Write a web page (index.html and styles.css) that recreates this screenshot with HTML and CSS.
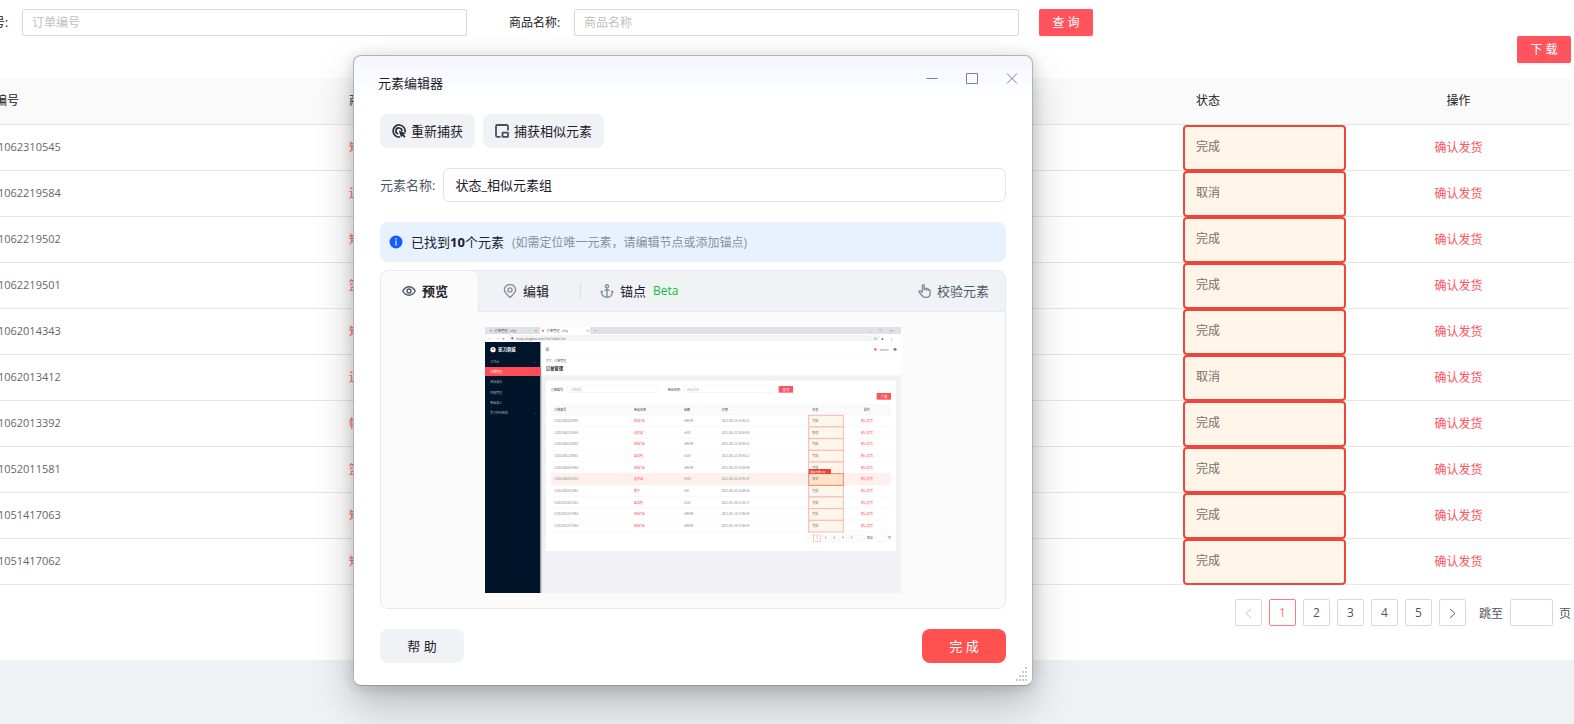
FILE: index.html
```html
<!DOCTYPE html>
<html lang="zh-CN">
<head>
    <meta charset="UTF-8">
    <meta name="viewport" content="width=device-width, initial-scale=1.0">
    <title>订单管理</title>
    <link rel="stylesheet" href="styles.css">
</head>
<body>
    <main class="order-page">
        <form class="search-form">
            <div class="field">
                <label for="orderNo">订单编号:</label>
                <input type="text" id="orderNo" placeholder="订单编号">
            </div>
            <div class="field">
                <label for="goodsName">商品名称:</label>
                <input type="text" id="goodsName" placeholder="商品名称">
            </div>
            <button type="button" class="btn-red">查 询</button>
        </form>
        <div class="actions">
            <button type="button" class="btn-red">下 载</button>
        </div>

        <table class="orders">
            <thead>
                <tr><th class="col-no">订单编号</th><th>商品名称</th><th class="col-status">状态</th><th class="col-op">操作</th></tr>
            </thead>
            <tbody>
                <tr><td class="no">U2021062310545</td><td class="goods">短袖T恤</td><td class="status"><div>完成</div></td><td class="op"><a href="#">确认发货</a></td></tr>
                <tr><td class="no">U2021062219584</td><td class="goods">连衣裙</td><td class="status"><div>取消</div></td><td class="op"><a href="#">确认发货</a></td></tr>
                <tr><td class="no">U2021062219502</td><td class="goods">短袖T恤</td><td class="status"><div>完成</div></td><td class="op"><a href="#">确认发货</a></td></tr>
                <tr><td class="no">U2021062219501</td><td class="goods">篮球鞋</td><td class="status"><div>完成</div></td><td class="op"><a href="#">确认发货</a></td></tr>
                <tr><td class="no">U2021062014343</td><td class="goods">短袖T恤</td><td class="status"><div>完成</div></td><td class="op"><a href="#">确认发货</a></td></tr>
                <tr><td class="no">U2021062013412</td><td class="goods">连衣裙</td><td class="status"><div>取消</div></td><td class="op"><a href="#">确认发货</a></td></tr>
                <tr><td class="no">U2021062013392</td><td class="goods">帽子</td><td class="status"><div>完成</div></td><td class="op"><a href="#">确认发货</a></td></tr>
                <tr><td class="no">U2021052011581</td><td class="goods">篮球鞋</td><td class="status"><div>完成</div></td><td class="op"><a href="#">确认发货</a></td></tr>
                <tr><td class="no">U2021051417063</td><td class="goods">短袖T恤</td><td class="status"><div>完成</div></td><td class="op"><a href="#">确认发货</a></td></tr>
                <tr><td class="no">U2021051417062</td><td class="goods">短袖T恤</td><td class="status"><div>完成</div></td><td class="op"><a href="#">确认发货</a></td></tr>
            </tbody>
        </table>

        <nav class="pager">
            <button type="button" class="prev" aria-label="上一页" disabled><svg width="9" height="12" viewBox="0 0 9 12"><path d="M7 2 2 6.5 7 11"/></svg></button>
            <button type="button" class="current">1</button>
            <button type="button">2</button>
            <button type="button">3</button>
            <button type="button">4</button>
            <button type="button">5</button>
            <button type="button" class="next" aria-label="下一页"><svg width="9" height="12" viewBox="0 0 9 12"><path d="M2 2 7 6.5 2 11"/></svg></button>
            <label for="jump">跳至</label>
            <input type="text" id="jump">
            <span>页</span>
        </nav>
    </main>

    <section class="editor">
        <header class="editor-header">
            <h1>元素编辑器</h1>
            <div class="window-buttons">
                <button type="button" aria-label="最小化"><svg width="14" height="14" viewBox="0 0 14 14"><path d="M1.500 7.500h11"/></svg></button>
                <button type="button" aria-label="最大化"><svg width="14" height="14" viewBox="0 0 14 14"><path d="M1.500 2.500h11v10h-11z"/></svg></button>
                <button type="button" aria-label="关闭"><svg width="14" height="14" viewBox="0 0 14 14"><path d="M2 2.500 12 12.500M12 2.500 2 12.500"/></svg></button>
            </div>
        </header>

        <div class="editor-body">
            <div class="toolbar">
                <button type="button" class="btn-grey">
                    <svg width="14" height="14" viewBox="0 0 14 14" fill="none" stroke="#2b303b" stroke-width="1.700"><path d="M12.900 8.500A6 6 0 1 0 8 12.900"/><path d="M9.900 7.200A3 3 0 1 0 6.300 9.900"/><path d="M6.800 6.600l6.800 2.600-1.900 1.300 1.900 2-1.300 1.300-2-2-1.300 1.800z" fill="#2b303b" stroke="none"/></svg>
                    重新捕获
                </button>
                <button type="button" class="btn-grey">
                    <svg width="14" height="14" viewBox="0 0 14 14" fill="none" stroke="#4a4f5c" stroke-width="1.800"><path d="M5.500 12.900H2.400a1.400 1.400 0 0 1-1.400-1.400V2.400A1.400 1.400 0 0 1 2.400 1h9.200A1.400 1.400 0 0 1 13 2.400v4"/><rect x="7.500" y="8.700" width="5.500" height="4.200" rx=".5"/></svg>
                    捕获相似元素
                </button>
            </div>

            <div class="name-row">
                <label for="elementName">元素名称:</label>
                <input type="text" id="elementName" value="状态_相似元素组">
            </div>

            <div class="found">
                <svg width="14" height="14" viewBox="0 0 14 14"><circle cx="7" cy="7" r="6.500" fill="#165dff"/><path d="M7 3v1.400M7 5.500V10.500" stroke="#d5e3ff" stroke-width="1.300"/></svg>
                <span>已找到<b>10</b>个元素</span>
                <small>(如需定位唯一元素，请编辑节点或添加锚点)</small>
            </div>

            <div class="panel">
                <div class="tabs">
                    <button type="button" class="tab active">
                        <svg width="14" height="14" viewBox="0 0 14 14" stroke-width="1.400"><path d="M.8 7C2.200 4.300 4.400 2.800 7 2.800S11.800 4.300 13.200 7C11.800 9.700 9.600 11.200 7 11.200S2.200 9.700.8 7z"/><circle cx="7" cy="7" r="2"/></svg>
                        预览
                    </button>
                    <button type="button" class="tab">
                        <svg width="14" height="14" viewBox="0 0 14 14" stroke-width="1.400"><path d="M7 13.500C3.500 10.300 1.400 8.200 1.400 5.700a5.600 5.200 0 0 1 11.200 0c0 2.500-2.100 4.600-5.600 7.800z"/><circle cx="7" cy="5.900" r="2"/></svg>
                        编辑
                    </button>
                    <button type="button" class="tab anchor">
                        <svg width="14" height="14" viewBox="0 0 14 14" stroke-width="1.400"><circle cx="7" cy="2.300" r="1.600"/><path d="M7 4v9.300M4.500 6.300h5M.5 7.500h2.600M10.900 7.500h2.600M1.500 7.500c0 3.500 2 5.800 5.500 5.800s5.500-2.300 5.500-5.800"/></svg>
                        锚点
                        <em>Beta</em>
                    </button>
                    <button type="button" class="verify">
                        <svg width="14" height="14" viewBox="0 0 14 14" stroke-width="1.400"><path d="M4.400 8.500V1.700c0-1.300 1.900-1.300 1.900 0v4.600M6.300 6.300V5.200c0-1 1.900-1 1.900 0v1.500M8.200 6V5.300c0-1 1.900-1 1.900 0V7M10.100 6.500c0-1 2-.9 2 .2v2.800c0 2.200-1.500 4-4.100 4-2.100 0-3.400-.8-4.300-2.300L1.200 8c-.5-1 .8-1.600 1.500-.9l1.700 1.400"/></svg>
                        校验元素
                    </button>
                </div>
                <div class="preview">
                    <svg class="thumb" viewBox="0 0 1248 798" role="img" aria-label="订单管理">
                        <rect width="1248" height="798" fill="#f0f0f5"/>
                        <!-- browser bar -->
                        <rect width="1248" height="21" fill="#dee1e6"/>
                        <rect x="165" width="150" height="21" fill="#fff"/>
                        <rect y="21" width="1248" height="24" fill="#fff"/>
                        <rect x="66" y="24" width="1120" height="18" rx="9" fill="#f3f4f4"/>
                        <g font-size="10" fill="#555">
                            <circle cx="18" cy="11" r="3" fill="#ff8088"/><text x="28" y="15">订单管理 - ctly</text><text x="148" y="15">×</text>
                            <circle cx="174" cy="11" r="3" fill="#ff535e"/><text x="184" y="15">订单管理 - ctly</text><text x="303" y="15">×</text>
                            <text x="328" y="15">+</text>
                            <text x="1155" y="15">–</text><text x="1183" y="15">❐</text><text x="1214" y="15">×</text>
                            <text x="10" y="38" fill="#aaa">←</text><text x="32" y="38" fill="#aaa">→</text><text x="52" y="38">⟳</text>
                            <circle cx="82" cy="34" r="3"/><text x="93" y="38" fill="#777">shop.yingdao.com/list/table-list</text>
                            <text x="1166" y="38">☆</text><text x="1188" y="38">♟</text><text x="1214" y="38">⋮</text>
                        </g>
                        <!-- side menu -->
                        <rect y="45" width="166" height="753" fill="#001529"/>
                        <rect x="166" y="45" width="3" height="753" fill="#8c979f"/>
                        <rect y="120" width="167" height="27" fill="#ff4d58"/>
                        <circle cx="24" cy="68" r="8" fill="#fff"/><circle cx="24" cy="66" r="3" fill="#ff535e"/>
                        <text x="40" y="73" font-size="13" font-weight="bold" fill="#fff">影刀商城</text>
                        <g font-size="9" fill="#a6adb4">
                            <text x="16" y="107">工作台</text><text x="148" y="107">⌄</text>
                            <text x="16" y="138" fill="#fff">订单管理</text>
                            <text x="16" y="169">商品展示</text>
                            <text x="16" y="200">内部管理</text>
                            <text x="16" y="231">数据录入</text>
                            <text x="16" y="262">影刀RPA商城</text><text x="148" y="262">⌄</text>
                        </g>
                        <!-- page head -->
                        <rect x="169" y="45" width="1079" height="100" fill="#fff"/>
                        <path d="M169 88h1079" stroke="#f3f3f6"/>
                        <path d="M182 63h10M182 67h10M182 71h10" stroke="#777" stroke-width="2"/>
                        <circle cx="1171" cy="67" r="4" fill="#ff6d76"/><text x="1184" y="71" font-size="9" fill="#888">admin</text><circle cx="1230" cy="67" r="5" fill="#888"/>
                        <text x="182" y="106" font-size="9" fill="#999">首页 / <tspan fill="#555">订单管理</tspan></text>
                        <text x="182" y="130" font-size="13" font-weight="bold" fill="#222">订单管理</text>
                        <!-- search -->
                        <rect x="183" y="161" width="1050" height="511" fill="#fff"/>
                        <g font-size="9" fill="#444">
                            <text x="198" y="191">订单编号:</text><rect x="247" y="177" width="270" height="20" fill="#fff" stroke="#e8e8e8"/><text x="256" y="191" fill="#bbb">订单编号</text>
                            <text x="548" y="191">商品名称:</text><rect x="597" y="177" width="270" height="20" fill="#fff" stroke="#e8e8e8"/><text x="606" y="191" fill="#bbb">商品名称</text>
                        </g>
                        <rect x="881" y="177" width="43" height="20" fill="#ff535e"/><text x="893" y="191" font-size="9" fill="#fff">查 询</text>
                        <rect x="1175" y="198" width="43" height="20" fill="#ff535e"/><text x="1187" y="212" font-size="9" fill="#fff">下 载</text>
                        <rect x="198" y="231" width="1020" height="33" fill="#fafafa"/>
                        <rect x="198" y="439" width="1020" height="35" fill="#fff0ee"/>
                        <g font-size="9" fill="#444">
                            <text x="208" y="251">订单编号</text><text x="447" y="251">商品名称</text><text x="597" y="251">金额</text><text x="710" y="251">日期</text><text x="982" y="251">状态</text><text x="1136" y="251">操作</text>
                        </g>
                        <path d="M198 264h1020M198 299h1020M198 334h1020M198 369h1020M198 404h1020M198 439h1020M198 474h1020M198 509h1020M198 544h1020M198 579h1020M198 614h1020" stroke="#eee"/>
                        <g font-size="9" fill="#888">
                            <text x="208" y="285">U2021062310545</text><text x="597" y="285">¥99.99</text><text x="710" y="285">2021-06-23 14:05:22</text>
                            <text x="208" y="320">U2021062219584</text><text x="597" y="320">¥420</text><text x="710" y="320">2021-06-22 19:58:45</text>
                            <text x="208" y="355">U2021062219502</text><text x="597" y="355">¥99.99</text><text x="710" y="355">2021-06-22 19:50:23</text>
                            <text x="208" y="390">U2021062219501</text><text x="597" y="390">¥188</text><text x="710" y="390">2021-06-22 19:50:12</text>
                            <text x="208" y="425">U2021062014343</text><text x="597" y="425">¥99.99</text><text x="710" y="425">2021-06-20 14:34:39</text>
                            <text x="208" y="460">U2021062013412</text><text x="597" y="460">¥420</text><text x="710" y="460">2021-06-20 13:41:24</text>
                            <text x="208" y="495">U2021062013392</text><text x="597" y="495">¥50</text><text x="710" y="495">2021-06-20 13:39:26</text>
                            <text x="208" y="530">U2021052011581</text><text x="597" y="530">¥188</text><text x="710" y="530">2021-05-20 11:58:17</text>
                            <text x="208" y="565">U2021051417063</text><text x="597" y="565">¥99.99</text><text x="710" y="565">2021-05-14 17:06:34</text>
                            <text x="208" y="600">U2021051417062</text><text x="597" y="600">¥99.99</text><text x="710" y="600">2021-05-14 17:06:24</text>
                        </g>
                        <g font-size="9" fill="#ff535e">
                            <text x="447" y="285">短袖T恤</text><text x="1128" y="285">确认发货</text>
                            <text x="447" y="320">连衣裙</text><text x="1128" y="320">确认发货</text>
                            <text x="447" y="355">短袖T恤</text><text x="1128" y="355">确认发货</text>
                            <text x="447" y="390">篮球鞋</text><text x="1128" y="390">确认发货</text>
                            <text x="447" y="425">短袖T恤</text><text x="1128" y="425">确认发货</text>
                            <text x="447" y="460">连衣裙</text><text x="1128" y="460">确认发货</text>
                            <text x="447" y="495">帽子</text><text x="1128" y="495">确认发货</text>
                            <text x="447" y="530">篮球鞋</text><text x="1128" y="530">确认发货</text>
                            <text x="447" y="565">短袖T恤</text><text x="1128" y="565">确认发货</text>
                            <text x="447" y="600">短袖T恤</text><text x="1128" y="600">确认发货</text>
                        </g>
                        <!-- matched cells -->
                        <g fill="#fef6ea" stroke="#f5b9b6" stroke-width="3">
                            <rect x="971" y="265" width="104" height="35"/><rect x="971" y="300" width="104" height="35"/>
                            <rect x="971" y="335" width="104" height="35"/><rect x="971" y="370" width="104" height="35"/>
                            <rect x="971" y="405" width="104" height="35"/><rect x="971" y="475" width="104" height="35"/>
                            <rect x="971" y="510" width="104" height="35"/><rect x="971" y="545" width="104" height="35"/>
                            <rect x="971" y="580" width="104" height="35"/>
                            <rect x="971" y="440" width="104" height="35" fill="#ffe3c9" stroke="#f08a72"/>
                        </g>
                        <g font-size="9" fill="#777">
                            <text x="982" y="285">完成</text><text x="982" y="320">取消</text><text x="982" y="355">完成</text><text x="982" y="390">完成</text><text x="982" y="425">完成</text>
                            <text x="982" y="460">取消</text><text x="982" y="495">完成</text><text x="982" y="530">完成</text><text x="982" y="565">完成</text><text x="982" y="600">完成</text>
                        </g>
                        <rect x="971" y="426" width="67" height="15" fill="#e5453b"/><text x="976" y="437" font-size="8" fill="#fff">相似元素(10)</text>
                        <!-- pagination -->
                        <g fill="#fff" stroke="#e4e4e4">
                            <rect x="960" y="624" width="20" height="20"/><rect x="1012" y="624" width="20" height="20"/><rect x="1038" y="624" width="20" height="20"/><rect x="1064" y="624" width="20" height="20"/><rect x="1090" y="624" width="20" height="20"/><rect x="1116" y="624" width="20" height="20"/><rect x="1171" y="624" width="31" height="20"/>
                            <rect x="986" y="624" width="20" height="20" stroke="#ff535e"/>
                        </g>
                        <g font-size="9" fill="#666">
                            <text x="968" y="637" fill="#bbb">‹</text><text x="994" y="637" fill="#ff535e">1</text><text x="1019" y="637">2</text><text x="1045" y="637">3</text><text x="1071" y="637">4</text><text x="1097" y="637">5</text><text x="1124" y="637">›</text>
                            <text x="1146" y="637">跳至</text><text x="1209" y="637">页</text>
                        </g>
                    </svg>
                </div>
            </div>

            <footer class="editor-footer">
                <button type="button" class="btn-grey">帮 助</button>
                <button type="button" class="btn-done">完 成</button>
            </footer>
        </div>
        <svg class="grip" width="14" height="14" viewBox="0 0 14 14" fill="#c6c9ce"><path d="M11 0h2v2h-2zM8 4h2v2H8zM11 4h2v2h-2zM5 8h2v2H5zM8 8h2v2H8zM11 8h2v2h-2zM2 12h2v2H2zM5 12h2v2H5zM8 12h2v2H8zM11 12h2v2h-2z"/></svg>
    </section>
</body>
</html>
```
FILE: styles.css
```css
* {
    box-sizing: border-box;
}
body {
    margin: 0;
    background: #f0f1f5;
    font-family: "Open Sans", "Noto Sans CJK SC", sans-serif;
    font-size: 12px;
    color: #333;
    overflow: hidden;
}
button, input {
    font-family: inherit;
    font-size: inherit;
    margin: 0;
}
button {
    border: none;
    cursor: pointer;
    padding: 0;
}
a {
    color: #ff535e;
    text-decoration: none;
}

/* order list, scrolled a little to the right */
.order-page {
    margin-left: -43px;
    padding: 9px 3px 34px 0;
    background: #fff;
}
.search-form {
    display: flex;
    padding-right: 478px;
}
.field {
    display: flex;
    flex: 1;
    align-items: center;
    gap: 9px;
    margin-right: 42px;
}
.field + .field {
    margin-right: 20px;
}
.field label {
    width: 56px;
    padding-bottom: 2px;
    color: #222;
}
.field input {
    flex: 1;
    min-width: 0;
    height: 27px;
    padding: 0 9px;
    border: 1px solid #d9d9d9;
    border-radius: 2px;
}
.field input::placeholder {
    color: #bfbfbf;
}
.btn-red {
    width: 54px;
    height: 27px;
    padding-bottom: 2px;
    border-radius: 2px;
    background: #ff535e;
    color: #fff;
    box-shadow: 0 2px 0 rgba(0,0,0,0.04);
}
.actions {
    display: flex;
    justify-content: flex-end;
    margin-bottom: 15px;
}
.orders {
    width: 100%;
    table-layout: fixed;
    border-collapse: separate;
    border-spacing: 0;
}
.orders th, .orders td {
    height: 46px;
    padding: 0 10px 2px;
    border-bottom: 1px solid #e6e6e6;
    text-align: left;
}
.orders th {
    height: 47px;
    background: #fafafa;
    color: #222;
    font-weight: normal;
}
.orders td {
    color: #666;
}
.orders .col-no, .orders .no {
    padding-left: 14px;
}
.orders .col-no {
    width: 382px;
}
.orders .col-status {
    width: 163px;
    padding-left: 13px;
}
.orders .col-op {
    width: 225px;
}
.orders .no {
    font-size: 11px;
}
.orders .goods {
    color: #ff535e;
}
.orders .status {
    padding: 0;
    border-bottom: none;
}
.status div {
    height: 46px;
    padding-left: 11px;
    border: 2px solid #ec463d;
    border-radius: 4px;
    background: #fff6e9;
    line-height: 40px;
    color: #777065;
}
.orders .col-op, .orders .op {
    text-align: center;
}

.pager {
    display: flex;
    justify-content: flex-end;
    align-items: center;
    gap: 7px;
    margin-top: 14px;
    color: #555;
}
.pager button, .pager input {
    width: 27px;
    height: 27px;
    border: 1px solid #d9d9d9;
    border-radius: 2px;
    background: #fff;
    color: #555;
}
.pager .current {
    border-color: #ff7a82;
    color: #ff7a82;
}
.pager svg {
    display: block;
    margin: 0 auto;
    fill: none;
    stroke: #666;
}
.pager .prev svg {
    stroke: #c4c4c4;
}
.pager label {
    margin-left: 6px;
}
.pager input {
    width: 43px;
}
.pager span {
    margin-left: -1px;
}

/* editor window */
.editor {
    position: absolute;
    top: 55px;
    left: 353px;
    width: 680px;
    border: 1px solid #b0b2b6;
    border-bottom-color: #999;
    border-radius: 8px;
    background: linear-gradient(#f3f6ff, #fff 44px);
    box-shadow: 0 20px 40px rgba(0,0,0,0.22), 0 2px 14px rgba(0,0,0,0.16);
    font-size: 13px;
    color: #1d2129;
}
.editor-header {
    display: flex;
    justify-content: space-between;
    height: 58px;
    padding: 9px 7px 0 24px;
}
.editor-header h1 {
    margin: 0;
    padding-top: 8px;
    font-size: 13px;
    font-weight: normal;
    line-height: 20px;
}
.window-buttons {
    display: flex;
    gap: 14px;
}
.window-buttons button {
    width: 26px;
    height: 26px;
    background: none;
}
.window-buttons svg {
    display: block;
    margin: 0 auto;
    fill: none;
    stroke: #74829c;
}
.editor-body {
    padding: 0 26px 22px;
}
.toolbar {
    display: flex;
    gap: 8px;
}
.btn-grey, .btn-done {
    display: flex;
    align-items: center;
    justify-content: center;
    gap: 5px;
    height: 34px;
    padding: 0 12px 2px;
    border-radius: 8px;
    background: #f1f2f6;
    color: #1d2129;
}
.toolbar svg {
    margin-top: 2px;
}
.name-row {
    display: flex;
    align-items: center;
    gap: 8px;
    margin: 20px 0;
}
.name-row label {
    padding-bottom: 2px;
    color: #4e5969;
}
.name-row input {
    flex: 1;
    height: 34px;
    padding: 0 11px 2px;
    border: 1px solid #e3e4e8;
    border-radius: 6px;
    color: #1d2129;
}
.found {
    display: flex;
    align-items: center;
    height: 40px;
    padding: 0 9px;
    border-radius: 8px;
    background: #e8f2ff;
}
.found span {
    margin: 0 8px;
    padding-bottom: 2px;
}
.found small {
    font-size: 12px;
    color: #86909c;
}
.panel {
    margin: 8px 0 20px;
    border: 1px solid #e8e9f0;
    border-radius: 8px;
    background: #fbfbfb;
    overflow: hidden;
}
.tabs {
    display: flex;
    height: 41px;
    background: #f1f2f6;
}
.tab, .verify {
    display: flex;
    align-items: center;
    gap: 6px;
    padding: 0 24px 1px;
    border-bottom: 1px solid #e8e9f0;
    background: none;
    color: #1d2129;
}
.tab svg, .verify svg {
    fill: none;
    stroke: #86909c;
}
.tab.active {
    padding: 0 30px 2px 21px;
    border-right: 1px solid #e8e9f0;
    border-bottom: none;
    border-radius: 8px 8px 0 0;
    background: #fbfbfb;
    font-weight: bold;
}
.tab.active svg {
    stroke: #4e5969;
}
.tab.anchor {
    flex: 1;
    padding: 0 7px 1px;
}
/* short divider before the anchor tab */
.tab.anchor::before {
    content: "";
    width: 1px;
    height: 16px;
    margin-right: 13px;
    background: #dddfe6;
}
.tab em {
    margin-left: -3px;
    padding: 0 4px;
    border-radius: 3px;
    background: #e8f8ec;
    color: #27ae50;
    font-size: 12px;
    font-style: normal;
    line-height: 17px;
}
.verify {
    gap: 5px;
    padding: 0 16px 1px;
    color: #4e5969;
}
.preview {
    padding: 15px;
}
.thumb {
    display: block;
    width: 416px;
    margin: 0 auto;
    font-family: "Noto Sans CJK SC", sans-serif;
}
.editor-footer {
    display: flex;
    justify-content: space-between;
}
.editor-footer button {
    width: 84px;
}
.btn-done {
    background: #ff514f;
    color: #fff;
}
.grip {
    position: absolute;
    right: 4px;
    bottom: 4px;
}
```
